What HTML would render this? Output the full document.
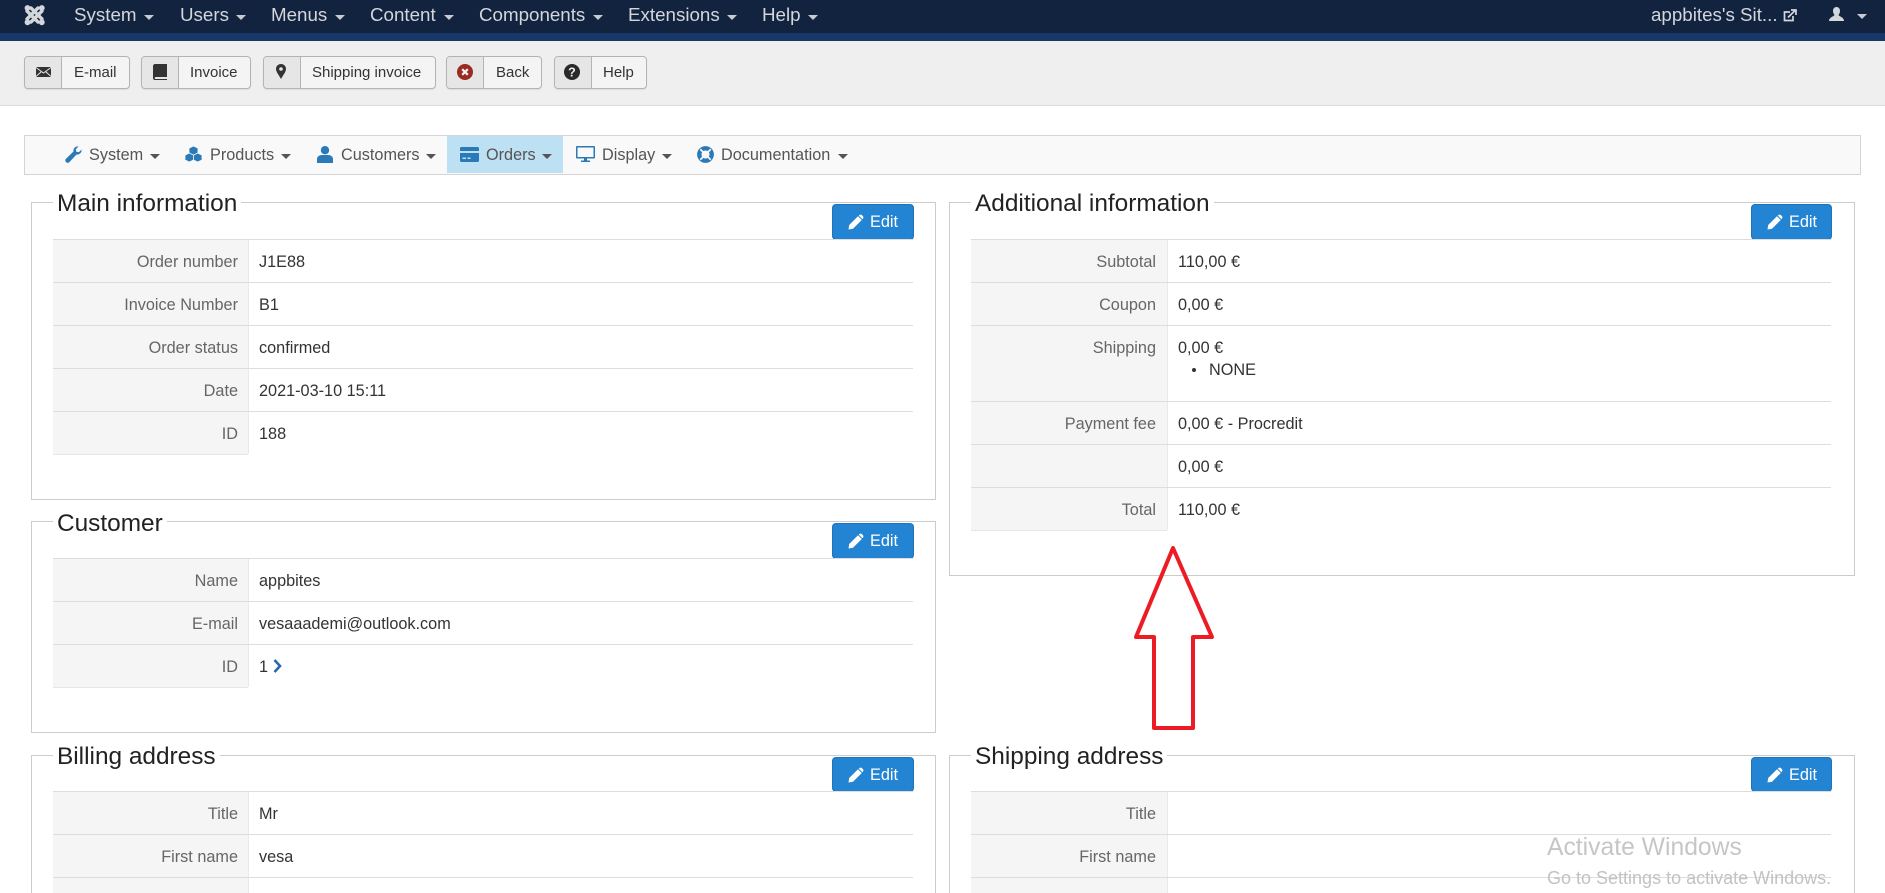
<!DOCTYPE html>
<html lang="en"><head><meta charset="utf-8"><title>Order</title>
<style>
html,body{margin:0;padding:0;width:1885px;height:893px;overflow:hidden;background:#fff;font-family:"Liberation Sans",Arial,sans-serif;}
#page{position:relative;width:1885px;height:893px;overflow:hidden;background:#fff}
.a{position:absolute;white-space:nowrap}
svg{position:absolute;overflow:visible}
#top{position:absolute;left:0;top:0;width:1885px;height:33px;background:#12233f;}
#band{position:absolute;left:0;top:33px;width:1885px;height:8px;background:#1a3867;}
#tool{position:absolute;left:0;top:41px;width:1885px;height:64px;background:#efefef;border-bottom:1px solid #dcdcdc;}
.n{position:absolute;top:0;line-height:30px;font-size:18.75px;color:#d3d6db;white-space:nowrap}
.c{position:absolute;width:0;height:0;border-left:5px solid transparent;border-right:5px solid transparent;border-top:5px solid #c8ccd2;}
.c.d{border-top-color:#555;top:154px}
.c.t{top:15px}
.b{position:absolute;top:56px;height:31px;border:1px solid #b4b4b4;border-radius:4px;background:#f4f4f4;box-shadow:0 1px 1px rgba(0,0,0,.08);}
.b i{position:absolute;left:0;top:0;height:31px;background:#e6e6e6;border-right:1px solid #b4b4b4;border-radius:3px 0 0 3px;}
.b span{position:absolute;top:0;line-height:32px;font-size:15px;color:#333;white-space:nowrap}
#sub{position:absolute;left:24px;top:135px;width:1835px;height:38px;background:#f9f9f9;border:1px solid #d4d4d4;}
#act{position:absolute;left:447px;top:136px;width:116px;height:37px;background:#bde0f3;}
.s{position:absolute;top:135px;line-height:41px;font-size:16.25px;color:#555;white-space:nowrap}
.box{position:absolute;border:1px solid #ccc;background:#fff;box-sizing:border-box}
.lg{position:absolute;background:#fff;height:30px;line-height:28px;font-size:24.4px;color:#222;padding:0 4px;white-space:nowrap}
.e{position:absolute;height:34px;background:#2384d3;border:1px solid #1f73b8;border-bottom-color:#1a659f;border-radius:4px;box-sizing:content-box;color:#fff;font-size:16.25px;line-height:35px;}
.e svg{left:15px;top:9px}
.e span{position:absolute;left:37px;top:0}
.tb{position:absolute;font-size:16.25px;line-height:45px;color:#333;}
.r{position:relative;height:42px;border-top:1px solid #ddd;}
.r .l{position:absolute;left:0;top:0;bottom:0;background:#f5f5f5;border-right:1px solid #e9e9e9;text-align:right;color:#666;box-sizing:border-box;padding-right:10px}
.r .v{position:absolute;top:0;white-space:nowrap}
.L .l{width:196px}.L .v{left:206px}
.R .l{width:197px;padding-right:11px}.R .v{left:207px}
.end{height:1px;background:#e6e6e6}
.L .end{width:195px}.R .end{width:196px}
</style></head><body><div id="page">
<div id="top"></div><div id="band"></div><div id="tool"></div>

<svg style="left:0;top:0" width="60" height="33" viewBox="0 0 60 33" fill="none" stroke="#d3d6db">
<g stroke-width="3.4" stroke-linecap="round"><path d="M27 11 L38 22M31 8 L42 19M42 11 L31 22M38 8 L27 19"/></g>
<g fill="#d3d6db" stroke="none"><circle cx="27.5" cy="8" r="2.9"/><circle cx="41.8" cy="8" r="2.9"/><circle cx="27.5" cy="22.3" r="2.9"/><circle cx="41.8" cy="22.3" r="2.9"/></g>
</svg>

<div class="n" style="left:74px">System</div><div class="c t" style="left:144px"></div>
<div class="n" style="left:180px">Users</div><div class="c t" style="left:236px"></div>
<div class="n" style="left:271px">Menus</div><div class="c t" style="left:335px"></div>
<div class="n" style="left:370px">Content</div><div class="c t" style="left:444px"></div>
<div class="n" style="left:479px">Components</div><div class="c t" style="left:593px"></div>
<div class="n" style="left:628px">Extensions</div><div class="c t" style="left:727px"></div>
<div class="n" style="left:762px">Help</div><div class="c t" style="left:808px"></div>
<div class="n" style="left:1651px">appbites's Sit...</div>
<svg style="left:1783px;top:9px" width="14" height="13" viewBox="0 0 14 13" fill="none" stroke="#d3d6db" stroke-width="1.7"><path d="M7 3H1.500V11.500H10V7"/><path d="M5 8.500 L12 1.500M8 1H13V6"/></svg>
<svg style="left:1829px;top:7px" width="15" height="14" viewBox="0 0 15 14" fill="#d3d6db"><path d="M7.500 0C10 0 11 2 11 4C11 6 10 7.200 9.500 8C10 9.500 15 10 15 14H0C0 10 5 9.500 5.500 8C5 7.200 4 6 4 4C4 2 5 0 7.500 0Z"/></svg>
<div class="c t" style="left:1857px;top:14px"></div>

<div class="b" style="left:24px;width:104px"><i style="width:36px"></i><span style="left:49px">E-mail</span></div>
<svg style="left:36px;top:67px" width="15" height="10" viewBox="0 0 15 10"><rect width="15" height="10" fill="#333"/><path d="M0 0.500 L7.500 6 L15 0.500M0 9.500 L5.500 4.500M15 9.500 L9.500 4.500" fill="none" stroke="#e6e6e6" stroke-width="1"/></svg>
<div class="b" style="left:141px;width:108px"><i style="width:36px"></i><span style="left:48px">Invoice</span></div>
<svg style="left:153px;top:64px" width="14" height="16" viewBox="0 0 14 16"><path d="M2 0H14V13H2.500C1.500 13 1.500 15 2.500 15H14V16H2C0.500 16 0 15 0 14V2C0 1 1 0 2 0Z" fill="#333"/></svg>
<div class="b" style="left:263px;width:171px"><i style="width:36px"></i><span style="left:48px">Shipping invoice</span></div>
<svg style="left:276px;top:64px" width="10" height="15" viewBox="0 0 10 15"><path fill-rule="evenodd" d="M5 0C8 0 10 2.200 10 5C10 8 6.500 12 5 15C3.500 12 0 8 0 5C0 2.200 2 0 5 0ZM5 3.200A1.800 1.800 0 1 0 5 6.800A1.800 1.800 0 1 0 5 3.200Z" fill="#333"/></svg>
<div class="b" style="left:446px;width:94px"><i style="width:36px"></i><span style="left:49px">Back</span></div>
<svg style="left:457px;top:64px" width="16" height="16" viewBox="0 0 16 16"><circle cx="8" cy="8" r="8" fill="#9a2a22"/><path d="M5.200 5.200L10.800 10.800M10.800 5.200L5.200 10.800" stroke="#f4f4f4" stroke-width="2.200"/></svg>
<div class="b" style="left:554px;width:91px"><i style="width:36px"></i><span style="left:48px">Help</span></div>
<svg style="left:564px;top:64px" width="16" height="16" viewBox="0 0 16 16"><circle cx="8" cy="8" r="8" fill="#2a2a2a"/><text x="8" y="12.500" text-anchor="middle" font-family="Liberation Sans" font-weight="bold" font-size="12.500" fill="#eee">?</text></svg>

<div id="sub"></div><div id="act"></div>
<svg style="left:65px;top:146px" width="17" height="17" viewBox="0 0 17 17"><path d="M16.500 3.500C17 6.500 14.500 9 11.500 8.500L4.500 16C3.500 17.200 1.800 17 1 16C0 15 0 13.700 1 12.800L8.500 5.500C8 2.500 10.500 0 13.500 0.500L10.800 3.200L11.300 5.700L13.800 6.200Z" fill="#2a7ab8"/></svg>
<div class="s" style="left:89px">System</div><div class="c d" style="left:150px"></div>
<svg style="left:185px;top:146px" width="17" height="16" viewBox="0 0 17 16" fill="#2a7ab8" stroke="#f9f9f9" stroke-width=".8"><path d="M8.500 0L13 2.200V7L8.500 9.200L4 7V2.200Z"/><path d="M4.300 7L8.600 9.200V14L4.300 16L0 14V9.200Z"/><path d="M12.700 7L17 9.200V14L12.700 16L8.400 14V9.200Z"/></svg>
<div class="s" style="left:210px">Products</div><div class="c d" style="left:281px"></div>
<svg style="left:317px;top:146px" width="16" height="17" viewBox="0 0 16 17" fill="#2a7ab8"><circle cx="8" cy="4.200" r="4.200"/><path d="M0 17V13C0 10.500 2.500 9 5 9H11C13.500 9 16 10.500 16 13V17Z"/></svg>
<div class="s" style="left:341px">Customers</div><div class="c d" style="left:426px"></div>
<svg style="left:460px;top:147px" width="19" height="15" viewBox="0 0 19 15"><path fill="#2a7ab8" d="M1.500 0H17.500A1.500 1.500 0 0 1 19 1.500V4H0V1.500A1.500 1.500 0 0 1 1.500 0ZM0 6H19V13.500A1.500 1.500 0 0 1 17.500 15H1.500A1.500 1.500 0 0 1 0 13.500Z"/><rect x="2.500" y="10.500" width="3.500" height="1.500" fill="#bde0f3"/><rect x="7.500" y="10.500" width="3" height="1.500" fill="#bde0f3"/></svg>
<div class="s" style="left:486px">Orders</div><div class="c d" style="left:542px"></div>
<svg style="left:576px;top:146px" width="19" height="16" viewBox="0 0 19 16"><path fill="#2a7ab8" fill-rule="evenodd" d="M1 0H18A1 1 0 0 1 19 1V11.500A1 1 0 0 1 18 12.500H1A1 1 0 0 1 0 11.500V1A1 1 0 0 1 1 0ZM1.500 1.500V11H17.500V1.500Z"/><path fill="#2a7ab8" d="M8 12.500H11V14.500H14V16H5V14.500H8Z"/></svg>
<div class="s" style="left:602px">Display</div><div class="c d" style="left:662px"></div>
<svg style="left:697px;top:146px" width="17" height="17" viewBox="0 0 17 17"><circle cx="8.500" cy="8.500" r="6.200" fill="none" stroke="#2a7ab8" stroke-width="4.400"/><path d="M3.300 3.300L6 6M13.700 3.300L11 6M3.300 13.700L6 11M13.700 13.700L11 11" stroke="#f9f9f9" stroke-width="1.800"/></svg>
<div class="s" style="left:721px">Documentation</div><div class="c d" style="left:838px"></div>

<!-- Main information -->
<div class="box" style="left:31px;top:202px;width:905px;height:298px"></div>
<div class="lg" style="left:53px;top:190px">Main information</div>
<div class="e" style="left:832px;top:204px;width:80px"><svg width="16" height="16" viewBox="0 0 16 16" fill="#fff"><path d="M0.500 15.500L1.200 11L10 2.200L13.800 6L5 14.800ZM11.200 1.200C12 0.400 13.200 0.400 14 1.200L14.800 2C15.600 2.800 15.600 4 14.800 4.800L14.400 5.200L10.800 1.600Z"/></svg><span>Edit</span></div>
<div class="tb L" style="left:53px;top:239px;width:860px">
<div class="r"><div class="l">Order number</div><div class="v">J1E88</div></div>
<div class="r"><div class="l">Invoice Number</div><div class="v">B1</div></div>
<div class="r"><div class="l">Order status</div><div class="v">confirmed</div></div>
<div class="r"><div class="l">Date</div><div class="v">2021-03-10 15:11</div></div>
<div class="r"><div class="l">ID</div><div class="v">188</div></div>
<div class="end"></div>
</div>

<!-- Customer -->
<div class="box" style="left:31px;top:521px;width:905px;height:212px"></div>
<div class="lg" style="left:53px;top:510px">Customer</div>
<div class="e" style="left:832px;top:523px;width:80px"><svg width="16" height="16" viewBox="0 0 16 16" fill="#fff"><path d="M0.500 15.500L1.200 11L10 2.200L13.800 6L5 14.800ZM11.200 1.200C12 0.400 13.200 0.400 14 1.200L14.800 2C15.600 2.800 15.600 4 14.800 4.800L14.400 5.200L10.800 1.600Z"/></svg><span>Edit</span></div>
<div class="tb L" style="left:53px;top:558px;width:860px">
<div class="r"><div class="l">Name</div><div class="v">appbites</div></div>
<div class="r"><div class="l">E-mail</div><div class="v">vesaaademi@outlook.com</div></div>
<div class="r"><div class="l">ID</div><div class="v">1</div><svg style="left:220px;top:14px" width="9" height="14" viewBox="0 0 9 14" fill="none" stroke="#2a69a8" stroke-width="2.600"><path d="M1.500 1L7 7L1.500 13"/></svg></div>
<div class="end"></div>
</div>

<!-- Billing -->
<div class="box" style="left:31px;top:755px;width:905px;height:138px;border-bottom:0"></div>
<div class="lg" style="left:53px;top:743px">Billing address</div>
<div class="e" style="left:832px;top:757px;width:80px;height:33px"><svg width="16" height="16" viewBox="0 0 16 16" fill="#fff"><path d="M0.500 15.500L1.200 11L10 2.200L13.800 6L5 14.800ZM11.200 1.200C12 0.400 13.200 0.400 14 1.200L14.800 2C15.600 2.800 15.600 4 14.800 4.800L14.400 5.200L10.800 1.600Z"/></svg><span>Edit</span></div>
<div class="tb L" style="left:53px;top:791px;width:860px">
<div class="r"><div class="l">Title</div><div class="v">Mr</div></div>
<div class="r"><div class="l">First name</div><div class="v">vesa</div></div>
<div class="r" style="height:15px"><div class="l"></div></div>
</div>

<!-- Additional -->
<div class="box" style="left:949px;top:202px;width:906px;height:374px"></div>
<div class="lg" style="left:971px;top:190px">Additional information</div>
<div class="e" style="left:1751px;top:204px;width:79px"><svg width="16" height="16" viewBox="0 0 16 16" fill="#fff"><path d="M0.500 15.500L1.200 11L10 2.200L13.800 6L5 14.800ZM11.200 1.200C12 0.400 13.200 0.400 14 1.200L14.800 2C15.600 2.800 15.600 4 14.800 4.800L14.400 5.200L10.800 1.600Z"/></svg><span>Edit</span></div>
<div class="tb R" style="left:971px;top:239px;width:860px">
<div class="r"><div class="l">Subtotal</div><div class="v">110,00 €</div></div>
<div class="r"><div class="l">Coupon</div><div class="v">0,00 €</div></div>
<div class="r" style="height:75px"><div class="l">Shipping</div><div class="v">0,00 €</div><div class="v" style="left:238px;top:33px;line-height:22px">NONE</div><div style="position:absolute;left:221px;top:42px;width:4px;height:4px;border-radius:50%;background:#333"></div></div>
<div class="r"><div class="l">Payment fee</div><div class="v">0,00 € - Procredit</div></div>
<div class="r"><div class="l"></div><div class="v">0,00 €</div></div>
<div class="r"><div class="l">Total</div><div class="v">110,00 €</div></div>
<div class="end"></div>
</div>

<!-- Shipping -->
<div class="box" style="left:949px;top:755px;width:906px;height:138px;border-bottom:0"></div>
<div class="lg" style="left:971px;top:743px">Shipping address</div>
<div class="e" style="left:1751px;top:757px;width:79px;height:33px"><svg width="16" height="16" viewBox="0 0 16 16" fill="#fff"><path d="M0.500 15.500L1.200 11L10 2.200L13.800 6L5 14.800ZM11.200 1.200C12 0.400 13.200 0.400 14 1.200L14.800 2C15.600 2.800 15.600 4 14.800 4.800L14.400 5.200L10.800 1.600Z"/></svg><span>Edit</span></div>
<div class="tb R" style="left:971px;top:791px;width:860px">
<div class="r"><div class="l">Title</div></div>
<div class="r"><div class="l">First name</div></div>
<div class="r" style="height:15px"><div class="l"></div></div>
</div>

<svg style="left:0;top:0" width="1885" height="893" viewBox="0 0 1885 893"><polygon points="1173,548 1212,637 1193,637 1193,728 1154,728 1154,637 1136,637" fill="none" stroke="#ed1c24" stroke-width="4" stroke-linejoin="round"/></svg>

<div class="a" style="left:1547px;top:833px;font-size:24.7px;line-height:30px;color:#c6c6c6">Activate Windows</div>
<div class="a" style="left:1547px;top:867px;font-size:18px;line-height:22px;color:#c2c2c2">Go to Settings to activate Windows.</div>
</div></body></html>
